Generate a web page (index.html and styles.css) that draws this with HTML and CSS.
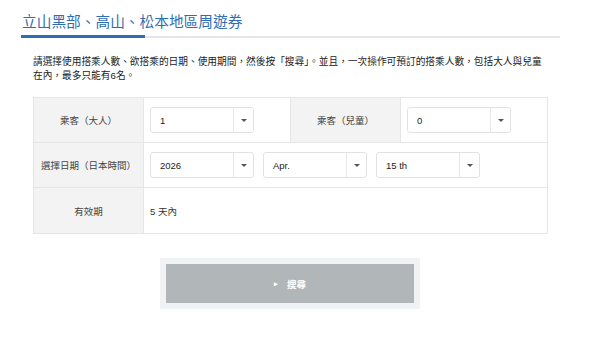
FILE: index.html
```html
<!DOCTYPE html>
<html lang="zh-Hant">
<head>
<meta charset="utf-8">
<link rel="stylesheet" href="styles.css">
</head>
<body>
<div class="page">
  <h1 class="title">立山黑部、高山、松本地區周遊券</h1>
  <div class="content">
    <p class="intro">請選擇使用搭乘人數、欲搭乘的日期、使用期間，然後按「搜尋」。並且，一次操作可預訂的搭乘人數，包括大人與兒童在內，最多只能有6名。</p>
    <table class="form">
      <colgroup>
        <col class="c1"><col class="c2"><col class="c3"><col class="c4">
      </colgroup>
      <tr>
        <th>乘客（大人）</th>
        <td><div class="sel"><span class="val">1</span><span class="arr"></span></div></td>
        <th>乘客（兒童）</th>
        <td><div class="sel"><span class="val">0</span><span class="arr"></span></div></td>
      </tr>
      <tr>
        <th>選擇日期（日本時間）</th>
        <td colspan="3">
          <div class="sels">
            <div class="sel"><span class="val">2026</span><span class="arr"></span></div>
            <div class="sel"><span class="val">Apr.</span><span class="arr"></span></div>
            <div class="sel"><span class="val">15 th</span><span class="arr"></span></div>
          </div>
        </td>
      </tr>
      <tr class="last">
        <th>有效期</th>
        <td colspan="3" class="plain">5 天內</td>
      </tr>
    </table>
    <div class="actions">
      <div class="btnwrap"><button class="btn"><span class="tri">▸</span>搜尋</button></div>
    </div>
  </div>
</div>
</body>
</html>
```
FILE: styles.css
```css
html, body { margin: 0; padding: 0; background: #fff; }
body {
  font-family: "Liberation Sans", "Noto Sans CJK TC", sans-serif;
  color: #333;
}
.page { padding: 0 40px 0 21px; }
.title {
  margin: 0;
  padding: 13px 0 0 1px;
  height: 23px;
  font-size: 14.7px;
  font-weight: normal;
  line-height: 18px;
  color: #2f6db3;
  border-bottom: 2px solid #e4e6e8;
  position: relative;
}
.title::after {
  content: "";
  position: absolute;
  left: 0;
  bottom: -2px;
  width: 124px;
  height: 3px;
  background: #2f6db3;
}
.content { padding: 0 13px 0 12px; }
.intro {
  margin: 17px 0 0 0;
  font-size: 9.7px;
  line-height: 14px;
  color: #222;
}
.form {
  margin-top: 14px;
  width: 514px;
  border-collapse: collapse;
  table-layout: fixed;
  font-size: 9.5px;
}
.c1 { width: 110px; }
.c2 { width: 147px; }
.c3 { width: 110px; }
.c4 { width: 147px; }
.form th, .form td {
  border: 1px solid #e6e6e6;
  height: 44px;
  padding: 0;
}
.form th {
  background: #f3f3f3;
  font-weight: normal;
  color: #444;
  text-align: center;
}
.form td { padding-left: 6px; }
.form tr.last th, .form tr.last td { height: 45px; }
.plain { color: #333; }
.sels { display: flex; gap: 9px; }
.sel {
  display: flex;
  width: 104px;
  height: 26px;
  box-sizing: border-box;
  border: 1px solid #e2e2e2;
  border-radius: 3px;
  background: #fff;
}
.val {
  flex: 1;
  display: flex;
  align-items: center;
  padding-left: 9px;
  color: #222;
}
.arr {
  width: 19px;
  border-left: 1px solid #e8e8e8;
  display: flex;
  align-items: center;
  justify-content: center;
}
.arr::before {
  content: "";
  width: 0; height: 0;
  border-left: 3px solid transparent;
  border-right: 3px solid transparent;
  border-top: 3px solid #555;
}
.actions {
  display: flex;
  justify-content: center;
  margin-top: 24px;
}
.btnwrap {
  width: 260px;
  box-sizing: border-box;
  padding: 6px;
  background: #f0f2f4;
}
.btn {
  display: flex;
  align-items: center;
  justify-content: center;
  width: 100%;
  height: 39px;
  border: 0;
  background: #b1b6b8;
  color: #fff;
  font-family: "Liberation Sans", "Noto Sans CJK TC", sans-serif;
  font-size: 9.5px;
  font-weight: bold;
}
.tri { font-size: 7px; margin-right: 9px; }
```
